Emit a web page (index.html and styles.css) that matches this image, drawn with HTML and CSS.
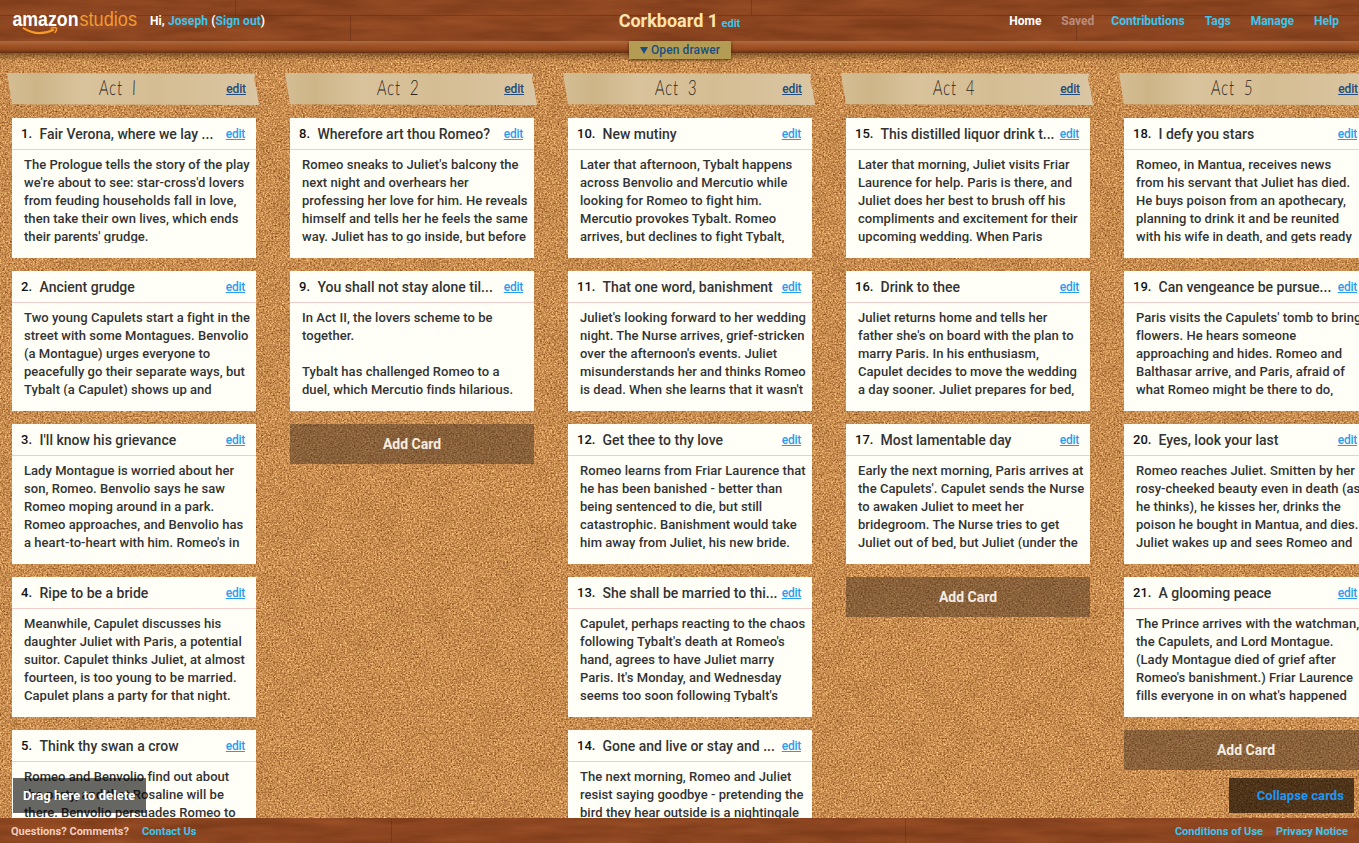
FILE: index.html
```html
<!DOCTYPE html>
<html lang="en">
<head>
<meta charset="utf-8">
<title>Corkboard 1</title>
<link rel="stylesheet" href="styles.css">
</head>
<body>
<svg class="texture" width="1359" height="843" aria-hidden="true">
  <defs>
    <filter id="cork" x="0" y="0" width="100%" height="100%" color-interpolation-filters="sRGB">
      <feTurbulence type="fractalNoise" baseFrequency="0.57 0.63" numOctaves="2" seed="4" result="fine"/>
      <feColorMatrix in="fine" values="0.58 0.32 0 0 0.345  0.64 0.36 0 0 0.06  0.52 0.28 0 0 -0.08  0 0 0 0 1" result="grain"/>
      <feTurbulence type="fractalNoise" baseFrequency="0.04" numOctaves="3" seed="7"/>
      <feColorMatrix values="0 0 0 0 0.4  0 0 0 0 0.22  0 0 0 0 0.05  0.22 0 0 0 -0.08"/>
      <feMerge><feMergeNode in="grain"/><feMergeNode/></feMerge>
    </filter>
    <filter id="wood" x="0" y="0" width="100%" height="100%" color-interpolation-filters="sRGB">
      <feTurbulence type="fractalNoise" baseFrequency="0.014 0.1" numOctaves="4" seed="9"/>
      <feColorMatrix values="0.16 0 0 0 0.465  0.11 0 0 0 0.215  0.07 0 0 0 0.09  0 0 0 0 1"/>
    </filter>
    <linearGradient id="rail" x1="0" y1="0" x2="0" y2="1">
      <stop offset="0" stop-color="#b4794b" stop-opacity=".75"/>
      <stop offset=".35" stop-color="#ad5c2d" stop-opacity=".7"/>
      <stop offset=".65" stop-color="#a3501f" stop-opacity=".6"/>
      <stop offset="1" stop-color="#552a10" stop-opacity=".85"/>
    </linearGradient>
    <linearGradient id="shade" x1="0" y1="0" x2="0" y2="1">
      <stop offset="0" stop-color="#4a2808" stop-opacity=".55"/>
      <stop offset="1" stop-color="#4a2808" stop-opacity="0"/>
    </linearGradient>
  </defs>
  <rect width="1359" height="843" filter="url(#cork)"/>
  <rect y="53" width="1359" height="8" fill="url(#shade)"/>
  <rect width="1359" height="53" filter="url(#wood)"/>
  <path d="M0 15.5H1359M235.500 0V15M350.500 16V41M751.500 0V15M1076.500 16V41" stroke="#4f210d" stroke-opacity=".35" fill="none"/>
  <rect y="41" width="1359" height="12" fill="url(#rail)"/>
  <rect y="818" width="1359" height="25" filter="url(#wood)"/>
  <path d="M391.500 818V843M905.500 818V843" stroke="#4f210d" stroke-opacity=".35"/>
</svg>

<header class="topbar">
  <div class="account">
    <svg class="logo" width="126" height="26" viewBox="0 0 126 26" role="img" aria-label="amazonstudios">
      <text class="logo-a" x="-.5" y="18" textLength="66" lengthAdjust="spacingAndGlyphs">amazon</text>
      <text class="logo-s" x="66.500" y="18" textLength="57.500" lengthAdjust="spacingAndGlyphs">studios</text>
      <path d="M10 19.800Q25 29.500 41 21.500" fill="none" stroke="#f79a2a" stroke-width="2"/>
      <path d="M37.500 20.300q4.500-1.500 6 0q.5 2.300-2 4.600" fill="none" stroke="#f79a2a" stroke-width="1.500"/>
    </svg>
    <span class="hello">Hi, <a>Joseph</a> (<a>Sign out</a>)</span>
  </div>
  <h1 class="board-title">Corkboard 1 <a>edit</a></h1>
  <nav class="menu"><span class="current">Home</span><span class="saved">Saved</span><a>Contributions</a><a>Tags</a><a>Manage</a><a>Help</a></nav>
  <div class="drawer"><i></i><span>Open drawer</span></div>
</header>

<main class="board">
  <section class="act">
    <div class="tape"><h2>Act <b class="one">I</b></h2><a>edit</a></div>
    <article class="card"><header><b>1.</b><h3>Fair Verona, where we lay ...</h3><a>edit</a></header><p>The Prologue tells the story of the play<br>we're about to see: star-cross'd lovers<br>from feuding households fall in love,<br>then take their own lives, which ends<br>their parents' grudge.</p></article>
    <article class="card"><header><b>2.</b><h3>Ancient grudge</h3><a>edit</a></header><p>Two young Capulets start a fight in the<br>street with some Montagues. Benvolio<br>(a Montague) urges everyone to<br>peacefully go their separate ways, but<br>Tybalt (a Capulet) shows up and</p></article>
    <article class="card"><header><b>3.</b><h3>I'll know his grievance</h3><a>edit</a></header><p>Lady Montague is worried about her<br>son, Romeo. Benvolio says he saw<br>Romeo moping around in a park.<br>Romeo approaches, and Benvolio has<br>a heart-to-heart with him. Romeo's in</p></article>
    <article class="card"><header><b>4.</b><h3>Ripe to be a bride</h3><a>edit</a></header><p>Meanwhile, Capulet discusses his<br>daughter Juliet with Paris, a potential<br>suitor. Capulet thinks Juliet, at almost<br>fourteen, is too young to be married.<br>Capulet plans a party for that night.</p></article>
    <article class="card"><header><b>5.</b><h3>Think thy swan a crow</h3><a>edit</a></header><p>Romeo and Benvolio find out about<br>the party, and that Rosaline will be<br>there. Benvolio persuades Romeo to</p></article>
  </section>
  <section class="act">
    <div class="tape"><h2>Act <b>2</b></h2><a>edit</a></div>
    <article class="card"><header><b>8.</b><h3>Wherefore art thou Romeo?</h3><a>edit</a></header><p>Romeo sneaks to Juliet's balcony the<br>next night and overhears her<br>professing her love for him. He reveals<br>himself and tells her he feels the same<br>way. Juliet has to go inside, but before</p></article>
    <article class="card"><header><b>9.</b><h3>You shall not stay alone til...</h3><a>edit</a></header><p>In Act II, the lovers scheme to be<br>together.<br><br>Tybalt has challenged Romeo to a<br>duel, which Mercutio finds hilarious.</p></article>
    <div class="add">Add Card</div>
  </section>
  <section class="act">
    <div class="tape"><h2>Act <b>3</b></h2><a>edit</a></div>
    <article class="card wide"><header><b>10.</b><h3>New mutiny</h3><a>edit</a></header><p>Later that afternoon, Tybalt happens<br>across Benvolio and Mercutio while<br>looking for Romeo to fight him.<br>Mercutio provokes Tybalt. Romeo<br>arrives, but declines to fight Tybalt,</p></article>
    <article class="card wide"><header><b>11.</b><h3>That one word, banishment</h3><a>edit</a></header><p>Juliet's looking forward to her wedding<br>night. The Nurse arrives, grief-stricken<br>over the afternoon's events. Juliet<br>misunderstands her and thinks Romeo<br>is dead. When she learns that it wasn't</p></article>
    <article class="card wide"><header><b>12.</b><h3>Get thee to thy love</h3><a>edit</a></header><p>Romeo learns from Friar Laurence that<br>he has been banished - better than<br>being sentenced to die, but still<br>catastrophic. Banishment would take<br>him away from Juliet, his new bride.</p></article>
    <article class="card wide"><header><b>13.</b><h3>She shall be married to thi...</h3><a>edit</a></header><p>Capulet, perhaps reacting to the chaos<br>following Tybalt's death at Romeo's<br>hand, agrees to have Juliet marry<br>Paris. It's Monday, and Wednesday<br>seems too soon following Tybalt's</p></article>
    <article class="card wide"><header><b>14.</b><h3>Gone and live or stay and ...</h3><a>edit</a></header><p>The next morning, Romeo and Juliet<br>resist saying goodbye - pretending the<br>bird they hear outside is a nightingale</p></article>
  </section>
  <section class="act">
    <div class="tape"><h2>Act <b>4</b></h2><a>edit</a></div>
    <article class="card wide"><header><b>15.</b><h3>This distilled liquor drink t...</h3><a>edit</a></header><p>Later that morning, Juliet visits Friar<br>Laurence for help. Paris is there, and<br>Juliet does her best to brush off his<br>compliments and excitement for their<br>upcoming wedding. When Paris</p></article>
    <article class="card wide"><header><b>16.</b><h3>Drink to thee</h3><a>edit</a></header><p>Juliet returns home and tells her<br>father she's on board with the plan to<br>marry Paris. In his enthusiasm,<br>Capulet decides to move the wedding<br>a day sooner. Juliet prepares for bed,</p></article>
    <article class="card wide"><header><b>17.</b><h3>Most lamentable day</h3><a>edit</a></header><p>Early the next morning, Paris arrives at<br>the Capulets'. Capulet sends the Nurse<br>to awaken Juliet to meet her<br>bridegroom. The Nurse tries to get<br>Juliet out of bed, but Juliet (under the</p></article>
    <div class="add">Add Card</div>
  </section>
  <section class="act">
    <div class="tape"><h2>Act <b>5</b></h2><a>edit</a></div>
    <article class="card wide"><header><b>18.</b><h3>I defy you stars</h3><a>edit</a></header><p>Romeo, in Mantua, receives news<br>from his servant that Juliet has died.<br>He buys poison from an apothecary,<br>planning to drink it and be reunited<br>with his wife in death, and gets ready</p></article>
    <article class="card wide"><header><b>19.</b><h3>Can vengeance be pursue...</h3><a>edit</a></header><p>Paris visits the Capulets' tomb to bring<br>flowers. He hears someone<br>approaching and hides. Romeo and<br>Balthasar arrive, and Paris, afraid of<br>what Romeo might be there to do,</p></article>
    <article class="card wide"><header><b>20.</b><h3>Eyes, look your last</h3><a>edit</a></header><p>Romeo reaches Juliet. Smitten by her<br>rosy-cheeked beauty even in death (as<br>he thinks), he kisses her, drinks the<br>poison he bought in Mantua, and dies.<br>Juliet wakes up and sees Romeo and</p></article>
    <article class="card wide"><header><b>21.</b><h3>A glooming peace</h3><a>edit</a></header><p>The Prince arrives with the watchman,<br>the Capulets, and Lord Montague.<br>(Lady Montague died of grief after<br>Romeo's banishment.) Friar Laurence<br>fills everyone in on what's happened</p></article>
    <div class="add">Add Card</div>
  </section>
  <div class="trash">Drag here to delete</div>
  <div class="collapse">Collapse cards</div>
</main>

<footer class="bottombar">
  <div><span>Questions? Comments?</span><a>Contact Us</a></div>
  <div><a>Conditions of Use</a><a>Privacy Notice</a></div>
</footer>
</body>
</html>
```
FILE: styles.css
```css
* { box-sizing: border-box; }
body {
  margin: 0;
  width: 1359px;
  height: 843px;
  overflow: hidden;
  display: flex;
  flex-direction: column;
  position: relative;
  background: #c78c4c;
  font-family: Roboto, "Open Sans", sans-serif;
  font-weight: 500;
  color: #333;
}
h1, h2, h3, p { margin: 0; }
.texture { position: absolute; inset: 0; z-index: -1; }

.topbar {
  flex: none;
  height: 53px;
  padding: 8px 20px 0 13px;
  display: grid;
  grid-template-columns: 1fr auto 1fr;
  align-items: start;
  position: relative;
  z-index: 2;
  color: #fff;
  font-size: 12px;
  font-weight: 700;
}
.topbar a, .bottombar a { color: #3cc5ee; }
.account { display: flex; gap: 11px; }
.logo { overflow: visible; }
.logo-a { font: 700 20px "Liberation Sans", sans-serif; fill: #fff; }
.logo-s { font: 400 20px "Liberation Sans", sans-serif; fill: #f29a31; }
.hello { line-height: 26px; white-space: nowrap; letter-spacing: .09px; }
.board-title { padding-left: 7px; font-size: 18px; line-height: 26px; color: #ffe4ab; font-weight: 700; }
.board-title a { font-size: 11px; margin-left: -1px; }
.menu { display: flex; justify-content: flex-end; gap: 20px; line-height: 26px; }
.saved { color: #b98d7b; margin-right: -3px; }
.drawer {
  position: absolute;
  left: 629px;
  top: 41px;
  width: 102px;
  height: 18px;
  display: flex;
  align-items: center;
  justify-content: center;
  gap: 3px;
  background: #b49c55;
  box-shadow: 0 1px 3px rgba(60, 30, 0, .8);
  color: #194e80;
  font-size: 12px;
  font-weight: 500;
  letter-spacing: .1px;
}
.drawer i { border: 4px solid transparent; border-top: 7px solid #194e80; border-bottom: 0; }

.board {
  flex: none;
  height: 765px;
  padding: 20px 0 0 12px;
  display: flex;
  gap: 34px;
  overflow: hidden;
  position: relative;
}
.act { flex: none; width: 244px; display: flex; flex-direction: column; gap: 13px; }
.tape {
  flex: none;
  height: 32px;
  margin: 0 -3px 0 -5px;
  padding: 0 13px 0 92px;
  display: flex;
  align-items: center;
  justify-content: space-between;
  background: linear-gradient(90deg, #d5bd94, #cdb588 12%, #d9c39c 30%, #d5bd93 60%, #dac6a3);
  clip-path: polygon(0 0, 98.5% 2%, 98% 22%, 99% 50%, 100% 100%, 2% 98%, 1% 50%);
}
.tape h2 {
  padding-bottom: 4px;
  font: 300 21px/28px Lato, sans-serif;
  color: #2c251c;
  transform: scaleX(.7) skewX(-3deg);
  transform-origin: left;
  letter-spacing: 1.2px;
  word-spacing: 6px;
}
.tape h2 b { font-weight: 300; }
.tape a { color: #214b7d; font-size: 12px; letter-spacing: -.1px; text-decoration: underline; }

.card { flex: none; height: 140px; background: #fffff8; overflow: hidden; }
.card header {
  height: 32px;
  padding: 0 11px 0 9px;
  display: flex;
  align-items: center;
  border-bottom: 1px solid #f0cccb;
  white-space: nowrap;
}
.card b { width: 18.5px; font-size: 13px; font-weight: 500; color: #111; }
.card.wide b { width: 25.5px; }
.card h3 { flex: 1; font-size: 14px; font-weight: 500; color: #333; }
.card header a { font-size: 12px; letter-spacing: -.25px; color: #2a9cf0; text-decoration: underline; }
.card p {
  height: 87px;
  margin-top: 6px;
  padding-left: 12px;
  overflow: hidden;
  white-space: nowrap;
  font-size: 13px;
  line-height: 18px;
  letter-spacing: .045px;
}
.add {
  flex: none;
  height: 40px;
  background: rgba(68, 51, 36, .48);
  color: #f6ede0;
  font-size: 14px;
  font-weight: 700;
  line-height: 40px;
  text-align: center;
}
.trash, .collapse {
  position: absolute;
  top: 725px;
  height: 35px;
  line-height: 35px;
  font-weight: 700;
  background: rgba(0, 0, 0, .6);
}
.trash { left: 13px; width: 133px; padding-left: 10px; color: #fff; font-size: 13px; letter-spacing: .08px; white-space: nowrap; }
.collapse { left: 1229px; width: 125px; padding-right: 10px; text-align: right; color: #2196f3; font-size: 13px; letter-spacing: .07px; background: rgba(20, 10, 0, .68); }

.bottombar {
  flex: none;
  height: 25px;
  padding: 1px 11px 0;
  display: flex;
  justify-content: space-between;
  font-size: 11px;
  font-weight: 700;
  line-height: 26px;
  color: #f4cdbd;
  letter-spacing: .02px;
}
.bottombar div { display: flex; gap: 13px; }
```
